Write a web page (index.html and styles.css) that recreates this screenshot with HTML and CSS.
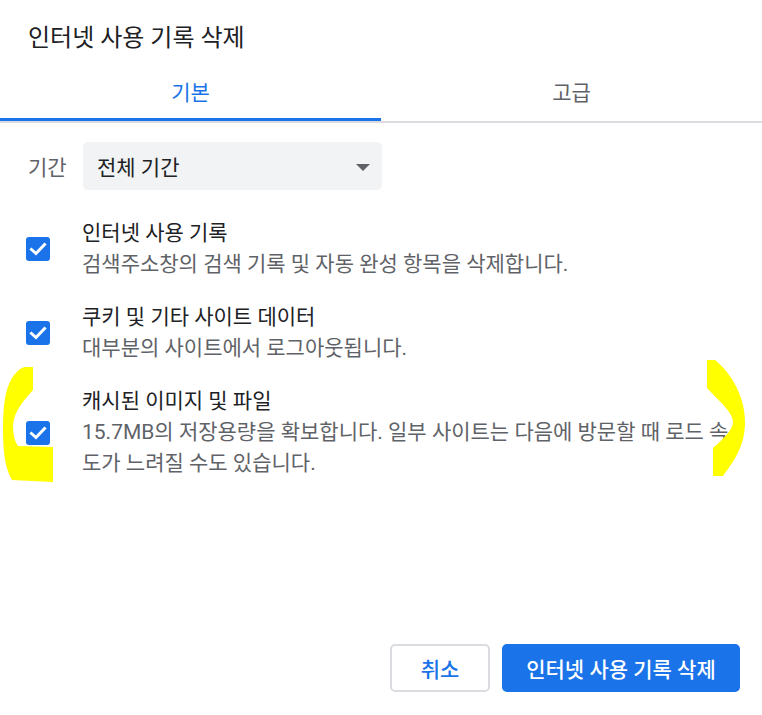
FILE: index.html
```html
<!DOCTYPE html>
<html lang="ko">
<head>
<meta charset="utf-8">
<title>인터넷 사용 기록 삭제</title>
<link rel="stylesheet" href="styles.css">
</head>
<body>
<div class="dialog">
  <h1 class="title">인터넷 사용 기록 삭제</h1>
  <div class="tabs">
    <div class="tab active">기본</div>
    <div class="tab">고급</div>
  </div>
  <div class="content">
    <div class="range-row">
      <span class="range-label">기간</span>
      <div class="select">
        <span>전체 기간</span>
        <span class="arrow"></span>
      </div>
    </div>
    <div class="items">
      <div class="item">
        <span class="checkbox"><svg viewBox="0 0 24 24" width="24" height="24"><polyline points="5.5,12.5 10,16.5 18.5,7.5" fill="none" stroke="#fff" stroke-width="3" stroke-linecap="square"/></svg></span>
        <div class="item-text">
          <div class="item-label">인터넷 사용 기록</div>
          <div class="item-desc">검색주소창의 검색 기록 및 자동 완성 항목을 삭제합니다.</div>
        </div>
      </div>
      <div class="item">
        <span class="checkbox"><svg viewBox="0 0 24 24" width="24" height="24"><polyline points="5.5,12.5 10,16.5 18.5,7.5" fill="none" stroke="#fff" stroke-width="3" stroke-linecap="square"/></svg></span>
        <div class="item-text">
          <div class="item-label">쿠키 및 기타 사이트 데이터</div>
          <div class="item-desc">대부분의 사이트에서 로그아웃됩니다.</div>
        </div>
      </div>
      <div class="item">
        <span class="checkbox"><svg viewBox="0 0 24 24" width="24" height="24"><polyline points="5.5,12.5 10,16.5 18.5,7.5" fill="none" stroke="#fff" stroke-width="3" stroke-linecap="square"/></svg></span>
        <div class="item-text">
          <div class="item-label">캐시된 이미지 및 파일</div>
          <div class="item-desc">15.7MB의 저장용량을 확보합니다. 일부 사이트는 다음에 방문할 때 로드 속도가 느려질 수도 있습니다.</div>
        </div>
      </div>
    </div>
  </div>
  <div class="buttons">
    <button class="btn btn-cancel">취소</button>
    <button class="btn btn-primary">인터넷 사용 기록 삭제</button>
  </div>
  <svg class="marks" viewBox="0 0 762 715" width="762" height="715">
    <path fill="#ffff00" d="M25 367 L33 367 L33 390 C26 398 14 410 13 425 C13 435 15 442 18 446 L53 447 L53 482 L12 480 C6 470 3 455 3 430 C3 405 5 390 12 378 C16 372 20 368 25 367 Z"/>
    <path fill="#ffff00" d="M707 360 L715 360 C730 372 745 395 745 422 C745 445 735 460 723 476 L713 476 L713 448 C722 440 733 430 733 422 C733 412 718 400 707 388 Z"/>
  </svg>
</div>
</body>
</html>
```

FILE: styles.css
```css
* { box-sizing: border-box; }
html, body {
  margin: 0;
  padding: 0;
  background: #fff;
}
body {
  font-family: Roboto, "Noto Sans CJK KR", "Noto Sans", sans-serif;
  font-size: 21px;
  color: #202124;
}
.dialog {
  position: relative;
  width: 762px;
  height: 715px;
  display: flex;
  flex-direction: column;
  background: #fff;
}
.title {
  margin: 0;
  padding: 23px 28px 0;
  font-size: 24px;
  font-weight: 400;
  line-height: 30px;
  color: #202124;
}
.tabs {
  display: flex;
  border-bottom: 2px solid #dadce0;
}
.tab {
  flex: 1;
  height: 68px;
  padding-top: 11px;
  display: flex;
  align-items: center;
  justify-content: center;
  color: #5f6368;
  border-bottom: 3px solid transparent;
}
.tab.active {
  color: #1a73e8;
  border-bottom-color: #1a73e8;
}
.content {
  flex: 1;
  padding: 19px 27px 0 28px;
}
.range-row {
  display: flex;
  align-items: center;
}
.range-label {
  width: 55px;
  flex: none;
  color: #5f6368;
}
.select {
  width: 299px;
  height: 48px;
  background: #f1f3f4;
  border-radius: 5px;
  display: flex;
  align-items: center;
  justify-content: space-between;
  padding: 0 12px 0 14px;
  color: #202124;
}
.arrow {
  width: 0;
  height: 0;
  border-left: 7px solid transparent;
  border-right: 7px solid transparent;
  border-top: 7px solid #5f6368;
  margin-top: 2px;
}
.items {
  display: flex;
  flex-direction: column;
  gap: 22px;
  margin-top: 28px;
}
.item {
  display: flex;
  align-items: center;
  gap: 32px;
}
.checkbox {
  flex: none;
  width: 24px;
  height: 24px;
  margin-left: -2px;
  background: #1a73e8;
  border-radius: 3px;
  display: block;
}
.checkbox svg { display: block; }
.item-text {
  line-height: 31px;
}
.item-label { color: #202124; }
.item-desc { color: #5f6368; }
.buttons {
  display: flex;
  justify-content: flex-end;
  gap: 12px;
  padding: 0 22px 23px;
}
.btn {
  height: 48px;
  border-radius: 5px;
  font-family: inherit;
  font-size: 21px;
  font-weight: 500;
  cursor: pointer;
}
.btn-cancel {
  width: 100px;
  background: #fff;
  color: #1a73e8;
  border: 2px solid #dadce0;
}
.btn-primary {
  width: 238px;
  background: #1a73e8;
  color: #fff;
  border: none;
}
.marks {
  position: absolute;
  left: 0;
  top: 0;
  pointer-events: none;
}
```
